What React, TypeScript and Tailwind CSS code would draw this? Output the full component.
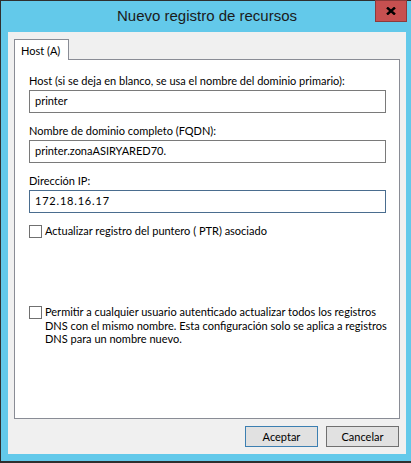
import type { ReactNode } from "react";

const TITLE_FONT = { fontFamily: '"Liberation Sans", Arial, sans-serif' };
const BODY_FONT = { fontFamily: 'Lato, "Liberation Sans", sans-serif' };

function Field({ label, value, focused, mono }: { label: string; value: string; focused?: boolean; mono?: boolean }) {
  return (
    <div className="flex flex-col">
      <label className="whitespace-nowrap text-[11px] leading-[15px] text-black">{label}</label>
      <div
        className={`mt-[2px] flex h-[23px] w-[357px] items-center whitespace-nowrap border bg-white px-[5px] text-[11px] text-black ${
          focused ? "border-[#4a6d8f]" : "border-[#7a7a7a]"
        } ${mono ? "tracking-[0.8px]" : ""}`}
      >
        {value}
      </div>
    </div>
  );
}

function Check({ children, className = "" }: { children: ReactNode; className?: string }) {
  return (
    <div className={`flex items-start gap-[3px] ${className}`}>
      <span className="mt-[1px] block h-[13px] w-[13px] shrink-0 border border-[#707070] bg-white" />
      <span className="whitespace-nowrap text-[11px] leading-[13.5px] text-black">{children}</span>
    </div>
  );
}

export default function App() {
  return (
    <div
      style={TITLE_FONT}
      className="relative flex h-[463px] w-[411px] flex-col border-t border-l border-b-2 border-[#2f2f2f] bg-[#63c9ea]"
    >
      <div className="flex h-[31px] shrink-0 items-center justify-center pb-[1px] pl-[2px] text-[15px] text-[#1b1b1b]">
        Nuevo registro de recursos
      </div>
      <button
        type="button"
        className="absolute right-[4px] top-[-1px] flex h-[22px] w-[32px] items-center justify-center border border-[#8d3a3a] bg-[#c75050]"
      >
        <svg width="10" height="8" viewBox="0 0 10 8">
          <path d="M1 0.5 L9 7.5 M9 0.5 L1 7.5" stroke="#000" strokeWidth="2.4" />
        </svg>
      </button>

      <div
        style={BODY_FONT}
        className="mb-[7px] ml-[7px] mr-[5px] flex flex-1 flex-col bg-[#f0f0f0] px-[6px] pt-[7px] pb-[7px]"
      >
        <div className="flex">
          <div className="relative z-10 -mb-px flex h-[21px] w-[55px] items-start whitespace-nowrap border border-b-0 border-[#898c95] bg-white pl-[6px] pt-[3px] text-[11px] text-black">
            Host (A)
          </div>
        </div>
        <div className="flex flex-1 flex-col border border-[#898c95] bg-white pl-[14px] pt-[13px]">
          <Field label="Host (si se deja en blanco, se usa el nombre del dominio primario):" value="printer" />
          <div className="mt-[10px]">
            <Field label="Nombre de dominio completo (FQDN):" value="printer.zonaASIRYARED70." />
          </div>
          <div className="mt-[10px]">
            <Field label="Dirección IP:" value="172.18.16.17" focused mono />
          </div>
          <Check className="mt-[11px]">Actualizar registro del puntero ( PTR) asociado</Check>
          <Check className="mt-[67px]">
            Permitir a cualquier usuario autenticado actualizar todos los registros
            <br />
            DNS con el mismo nombre. Esta configuración solo se aplica a registros
            <br />
            DNS para un nombre nuevo.
          </Check>
        </div>
        <div className="mt-[7px] flex justify-end gap-[8px] pr-[1px]">
          <button
            type="button"
            className="h-[21px] w-[73px] border border-[#3c7fb1] bg-[#e1e1e1] text-[11px] leading-none text-black"
          >
            Aceptar
          </button>
          <button
            type="button"
            className="h-[21px] w-[73px] border border-[#707070] bg-[#e1e1e1] text-[11px] leading-none text-black"
          >
            Cancelar
          </button>
        </div>
      </div>
    </div>
  );
}
